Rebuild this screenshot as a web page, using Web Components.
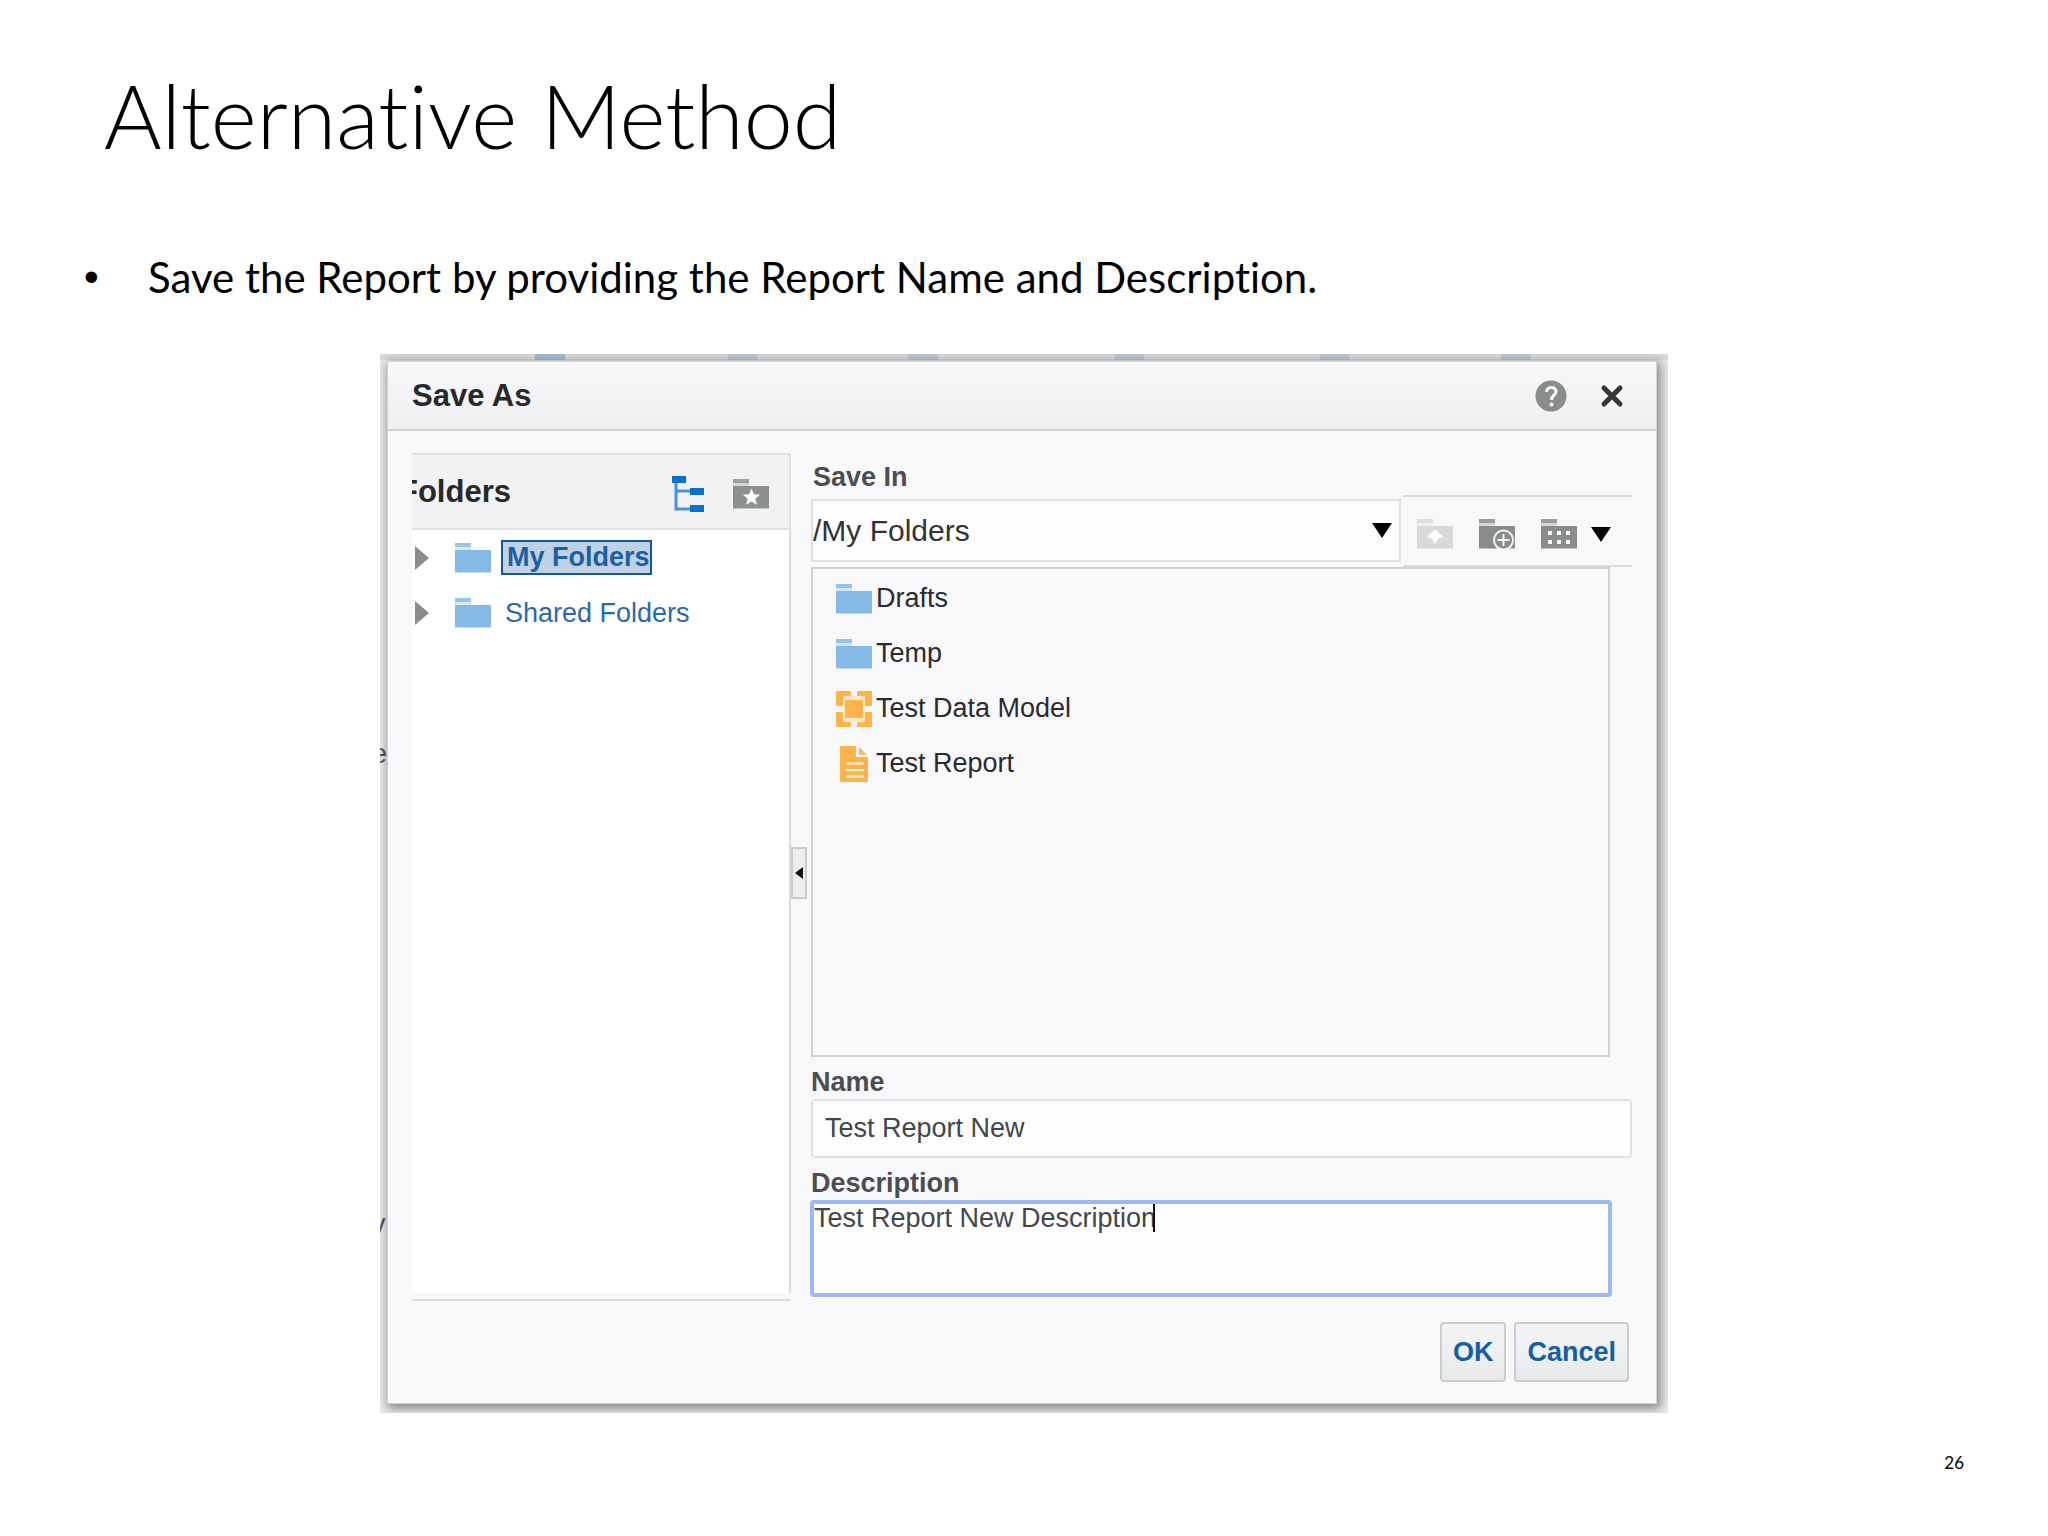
<!DOCTYPE html>
<html lang="en">
<head>
<meta charset="UTF-8">
<title>Alternative Method</title>
<style>
    body { margin: 0; background: #fff; color: #000; font-family: "Liberation Sans", Arial, sans-serif; }
</style>
</head>
<body>
<slide-page number="26">
    <span slot="title">Alternative Method</span>
    <span slot="bullet">Save the Report by providing the Report Name and Description.</span>
    <save-dialog heading="Save As">
        <folder-tree slot="tree" heading="Folders">
            <tree-node selected>My Folders</tree-node>
            <tree-node>Shared Folders</tree-node>
        </folder-tree>
        <location-bar label="Save In" value="/My Folders"></location-bar>
        <file-list>
            <file-item type="folder">Drafts</file-item>
            <file-item type="folder">Temp</file-item>
            <file-item type="model">Test Data Model</file-item>
            <file-item type="report">Test Report</file-item>
        </file-list>
        <text-field label="Name" value="Test Report New"></text-field>
        <text-field label="Description" value="Test Report New Description" multiline></text-field>
        <dialog-button slot="actions">OK</dialog-button>
        <dialog-button slot="actions">Cancel</dialog-button>
    </save-dialog>
</slide-page>

<script>
const folderShape = '<path d="M0 0h16v4H0z" opacity=".85"/><path d="M0 4h16v3H0z" opacity=".3"/><path d="M0 7h36v22.500H0z"/>';

const icons = {
    folder: `<svg width="36" height="30" viewBox="0 0 36 30" fill="#85bae6">${folderShape}</svg>`,
    model: `<svg width="36" height="36" viewBox="0 0 36 36" fill="#ffb44a">
        <path d="M0 0h15v5H7v10H0zM21 0h15v15h-7V5h-8zM0 21h7v10h8v5H0zM29 21h7v15H21v-5h8z"/>
        <path d="M7 5h22v26H7z" opacity=".25"/>
        <rect x="9" y="9" width="18" height="18"/></svg>`,
    report: `<svg width="36" height="36" viewBox="0 0 36 36">
        <path d="M4 0h16v11h12v25H4z" fill="#ffb44a"/><path d="M23 1l8 8h-8z" fill="#f5bd68"/>
        <path d="M10 17.500h18M10 24h18M10 30.500h18" stroke="#fff5e2" stroke-width="2"/></svg>`,
    tree: `<svg width="32" height="36" viewBox="0 0 32 36" fill="#0572ce">
        <path d="M4 7v26h14M4 15h14" fill="none" stroke="#4293da" stroke-width="3"/>
        <path d="M0 0h14v7H0zM18 12h14v7H18zM18 29h14v7H18z"/></svg>`,
    favorite: `<svg width="36" height="30" viewBox="0 0 36 30" fill="#8d9091">${folderShape}
        <path d="M18.500 9.500l2.500 5.700 6 .6-4.600 3.900 1.500 6-5.400-3.300-5.400 3.300 1.500-6-4.600-3.900 6-.6z" fill="#fff"/></svg>`,
    up: `<svg width="36" height="30" viewBox="0 0 36 30" fill="#d8d9db">${folderShape}
        <path d="M18 10l8 8-5 2-3 5-3-5-5-2z" fill="#fff"/></svg>`,
    add: `<svg width="36" height="30" viewBox="0 0 36 30" fill="#898c8d">${folderShape}
        <circle cx="24.500" cy="21" r="9.500" fill="#898c8d" stroke="#f1f2f3" stroke-width="2"/>
        <path d="M24.500 15v12M18.500 21h12" stroke="#f1f2f3" stroke-width="2"/></svg>`,
    grid: `<svg width="36" height="30" viewBox="0 0 36 30" fill="#898c8d">${folderShape}
        <path d="M7 12h4v4H7zM16 12h4v4h-4zM25 12h4v4h-4zM7 21h4v4H7zM16 21h4v4h-4zM25 21h4v4h-4z" fill="#fff"/></svg>`,
    down: '<svg width="20" height="15" viewBox="0 0 20 15"><path d="M0 0h20L10 15z" fill="#000"/></svg>',
    expand: '<svg width="14" height="24" viewBox="0 0 14 24"><path d="M0 0v24l14-12z" fill="#8b8b8b"/></svg>',
    collapse: '<svg width="8" height="12" viewBox="0 0 8 12"><path d="M8 0v12L0 6z" fill="#111"/></svg>',
    help: `<svg width="32" height="32" viewBox="0 0 32 32"><circle cx="16" cy="16" r="15.500" fill="#898c8d"/>
        <path d="M11.500 12c0-6 9.500-6 9.500-.5 0 4-4.500 3.500-4.500 8.500" fill="none" stroke="#fff" stroke-width="3"/>
        <circle cx="16.500" cy="24.500" r="2" fill="#fff"/></svg>`,
    close: '<svg width="24" height="24" viewBox="0 0 24 24"><path d="M4 4l16 16M20 4L4 20" stroke="#343638" stroke-width="5" stroke-linecap="round"/></svg>'
};

const baseStyle = `
    :host, * { box-sizing: border-box; }
    svg { display: block; flex: none; }
    button, input, select, textarea { font: inherit; margin: 0; }
    .icon-btn { display: block; padding: 0; border: 0; background: none; cursor: pointer; }
`;

class BaseElement extends HTMLElement {
    constructor() {
        super();
        this.attachShadow({ mode: 'open' });
    }

    connectedCallback() {
        this.shadowRoot.innerHTML = `<style>${baseStyle}</style>${this.render()}`;
    }
}

class SlidePage extends BaseElement {
    render() {
        return `
            <style>
                :host {
                    display: flex; flex-direction: column; min-height: 100vh;
                    font-family: Lato, Carlito, sans-serif; font-variant-ligatures: none;
                }
                h1 { margin: 63px 104px 0; font-size: 88px; line-height: 104px; font-weight: 300; }
                ul { margin: 82px 84px 0; padding: 0; list-style: none; font-size: 42px; line-height: 56px; }
                li { display: flex; }
                li::before { content: "•"; flex: 0 0 64px; font-family: "Liberation Sans", Arial, sans-serif; }
                main { margin-top: 49px; padding: 0 24px; font-family: "Liberation Sans", Arial, sans-serif; }
                footer { margin-top: auto; padding: 0 84px 61px; text-align: right; font-size: 17px; line-height: 24px; }
            </style>
            <h1><slot name="title"></slot></h1>
            <ul><li><slot name="bullet"></slot></li></ul>
            <main><slot></slot></main>
            <footer>${this.getAttribute('number')}</footer>
        `;
    }
}

class SaveDialog extends BaseElement {
    render() {
        return `
            <style>
                :host {
                    display: block; position: relative; overflow: hidden; max-width: 1288px;
                    margin: 0 auto; padding: 7px 11px 9px 7px; background: #e9eaec;
                }
                .strip { position: absolute; inset: 0 0 auto; height: 6px; background: #d8dadc; }
                .strip i { position: absolute; top: 0; width: 30px; height: 6px; background: #bcc8d2; }
                .strip i:first-child { background: #a5bad0; }
                .behind { position: absolute; left: -8px; width: 14px; font-size: 27px; line-height: 30px; color: #555; }
                section {
                    position: relative; background: #f8f8fb; border: 1px solid #d0d3d5;
                    box-shadow: 2px 3px 9px 2px rgba(0, 0, 0, .4);
                }
                header {
                    display: flex; align-items: center; height: 69px; padding: 0 32px 0 24px;
                    border-bottom: 2px solid #cfd2d4; background: linear-gradient(#f8f8fa, #efeff1);
                }
                h2 { margin: 0 auto 0 0; font-size: 31px; line-height: 36px; color: #27292b; }
                .close { margin-left: 33px; }
                .body { display: grid; grid-template-columns: 379px 20px minmax(0, 1fr); padding: 22px 24px 0; }
                .splitter { display: flex; align-items: center; padding-bottom: 8px; }
                .splitter button {
                    display: grid; place-items: center; width: 16px; height: 52px; padding: 0;
                    border: 2px solid #c8cccf; background: #eceff0;
                }
                .fields { padding-bottom: 4px; }
                footer { display: flex; justify-content: flex-end; gap: 8px; padding: 21px 27px 21px; }
            </style>
            <div class="strip" aria-hidden="true">
                <i style="left: 12%"></i><i style="left: 27%"></i><i style="left: 41%"></i>
                <i style="left: 57%"></i><i style="left: 73%"></i><i style="left: 87%"></i>
            </div>
            <span class="behind" style="top: 385px" aria-hidden="true">e</span>
            <span class="behind" style="top: 855px" aria-hidden="true">v</span>
            <section role="dialog" aria-labelledby="heading">
                <header>
                    <h2 id="heading">${this.getAttribute('heading')}</h2>
                    <button class="icon-btn" aria-label="Help">${icons.help}</button>
                    <button class="icon-btn close" aria-label="Close">${icons.close}</button>
                </header>
                <div class="body">
                    <slot name="tree"></slot>
                    <div class="splitter"><button aria-label="Collapse pane">${icons.collapse}</button></div>
                    <div class="fields"><slot></slot></div>
                </div>
                <footer><slot name="actions"></slot></footer>
            </section>
        `;
    }
}

class FolderTree extends BaseElement {
    render() {
        return `
            <style>
                :host { display: flex; flex-direction: column; border-bottom: 2px solid #d9dbdd; }
                header {
                    display: flex; align-items: center; height: 77px; padding-right: 20px; overflow: hidden;
                    border: 2px solid #dfe1e3; border-left: 0; background: #f2f2f4;
                }
                h3 { margin: 0 auto 0 0; font-size: 31px; line-height: 36px; text-indent: -13px; color: #27292b; }
                .icon-btn { padding-top: 5px; }
                .icon-btn + .icon-btn { margin-left: 29px; }
                .nodes { flex: 1; margin-bottom: 6px; border-right: 2px solid #d9dbdd; background: #fff; }
            </style>
            <header>
                <h3>${this.getAttribute('heading')}</h3>
                <button class="icon-btn" aria-label="Folders">${icons.tree}</button>
                <button class="icon-btn" aria-label="Favorites">${icons.favorite}</button>
            </header>
            <div class="nodes"><slot></slot></div>
        `;
    }
}

class TreeNode extends BaseElement {
    render() {
        return `
            <style>
                :host { display: flex; align-items: center; height: 55px; padding-left: 3px; font-size: 27px; color: #2c69a8; }
                .icon-btn { margin-right: 26px; }
                a { margin-left: 10px; padding: 0 0 0 4px; line-height: 34px; color: inherit; text-decoration: none; }
                :host([selected]) a {
                    border: 2px solid #15579b; background: #bfd2e5; color: #1c5fa3;
                    font-weight: bold; line-height: 31px;
                }
            </style>
            <button class="icon-btn" aria-label="Expand">${icons.expand}</button>
            ${icons.folder}
            <a href="#"><slot></slot></a>
        `;
    }
}

class LocationBar extends BaseElement {
    render() {
        return `
            <style>
                :host { display: block; padding-top: 7px; }
                label { display: block; padding-left: 2px; font-size: 27px; font-weight: bold; line-height: 34px; color: #4b4d50; }
                .row { display: flex; gap: 2px; padding-top: 1px; }
                .combo { display: grid; flex: 1; height: 63px; margin-top: 4px; align-items: center; }
                .combo > * { grid-area: 1 / 1; }
                .combo svg { justify-self: end; margin-right: 9px; pointer-events: none; }
                select {
                    width: 100%; height: 100%; padding: 0; border: 2px solid #dfe1e3; border-radius: 0;
                    appearance: none; background: #fdfdfe; font-size: 30px; color: #333;
                }
                .tools {
                    display: flex; align-items: center; height: 72px; padding: 6px 21px 0 14px;
                    border: solid #d9dbdd; border-width: 2px 0;
                }
                .tools .icon-btn { margin-right: 26px; }
                .tools .icon-btn:nth-child(3) { margin-right: 14px; }
                .tools .icon-btn:last-child { margin-right: 0; }
            </style>
            <label for="location">${this.getAttribute('label')}</label>
            <div class="row">
                <div class="combo">
                    <select id="location"><option>${this.getAttribute('value')}</option></select>
                    ${icons.down}
                </div>
                <div class="tools">
                    <button class="icon-btn" aria-label="Up one level" disabled>${icons.up}</button>
                    <button class="icon-btn" aria-label="New folder">${icons.add}</button>
                    <button class="icon-btn" aria-label="View">${icons.grid}</button>
                    <button class="icon-btn" aria-label="View options">${icons.down}</button>
                </div>
            </div>
        `;
    }
}

class FileList extends BaseElement {
    render() {
        return `
            <style>
                :host {
                    display: block; min-height: 490px; margin-right: 22px; padding-top: 2px;
                    border: 2px solid #d0d2d4;
                }
            </style>
            <slot></slot>
        `;
    }
}

class FileItem extends BaseElement {
    render() {
        return `
            <style>
                :host { display: flex; align-items: center; gap: 4px; height: 55px; padding-left: 23px; font-size: 27px; color: #2b2b2d; }
            </style>
            ${icons[this.getAttribute('type')]}
            <span><slot></slot></span>
        `;
    }
}

class TextField extends BaseElement {
    render() {
        const value = this.getAttribute('value') || '';
        const field = this.hasAttribute('multiline')
            ? `<div class="area"><textarea id="field">${value}</textarea><i></i></div>`
            : `<input id="field" type="text" value="${value}">`;

        return `
            <style>
                :host { display: block; padding-top: 8px; font-size: 27px; }
                label { display: block; font-weight: bold; line-height: 34px; color: #4b4d50; }
                input, textarea { display: block; width: 100%; color: #444648; background: #fdfdfe; }
                input { height: 59px; padding: 0 12px; border: 2px solid #dfe1e3; border-radius: 4px; }
                .area { position: relative; margin: 0 20px 0 -1px; }
                textarea {
                    height: 97px; padding: 0; border: 4px solid #9db8f2; border-radius: 4px;
                    line-height: 28px; resize: none; outline: 0; overflow: hidden;
                }
                /* text cursor after the last letter */
                i { position: absolute; top: 4px; left: 343px; width: 2px; height: 28px; background: #111; }
            </style>
            <label for="field">${this.getAttribute('label')}</label>
            ${field}
        `;
    }
}

class DialogButton extends BaseElement {
    render() {
        return `
            <style>
                :host { display: block; }
                button {
                    height: 60px; padding: 0 11px; border: 2px solid #cbced1; border-radius: 4px;
                    background: linear-gradient(#f3f4f5, #e7eaeb); color: #155fa5;
                    font-size: 27px; font-weight: bold; cursor: pointer;
                }
            </style>
            <button><slot></slot></button>
        `;
    }
}

customElements.define('slide-page', SlidePage);
customElements.define('save-dialog', SaveDialog);
customElements.define('folder-tree', FolderTree);
customElements.define('tree-node', TreeNode);
customElements.define('location-bar', LocationBar);
customElements.define('file-list', FileList);
customElements.define('file-item', FileItem);
customElements.define('text-field', TextField);
customElements.define('dialog-button', DialogButton);
</script>
</body>
</html>
